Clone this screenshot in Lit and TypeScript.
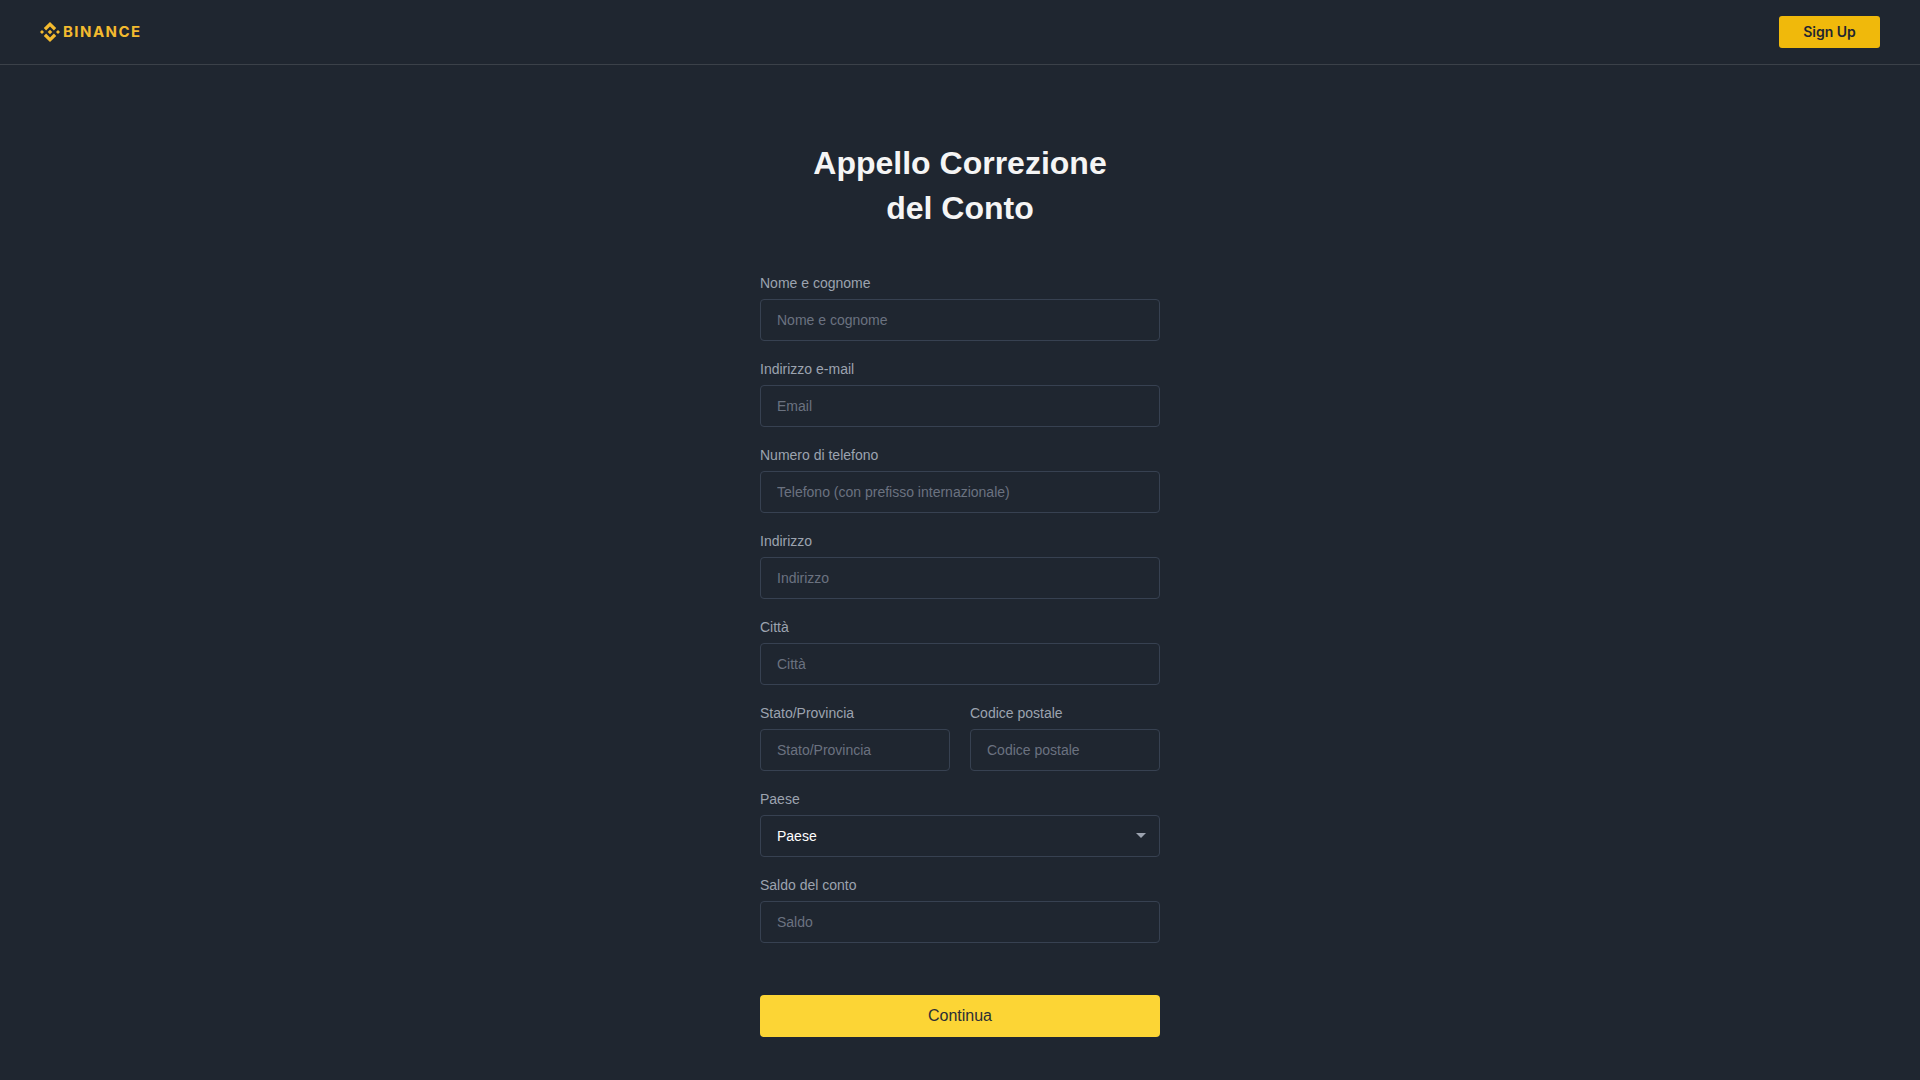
import { LitElement, html, css } from "lit";
import { customElement } from "lit/decorators.js";

@customElement("app-root")
export class AppRoot extends LitElement {
  static styles = css`
    :host { display: block; min-height: 1080px; background: #1f2630; font-family: "Liberation Sans", Arial, sans-serif; }
    .top { display: flex; align-items: center; justify-content: space-between; height: 64px; padding: 0 40px; border-bottom: 1px solid #3b4149; }
    .logo { display: flex; align-items: center; gap: 3px; color: #f3ba2f; }
    .logo svg { display: block; width: 20px; height: 20px; }
    .word { font: 700 15px/20px Inter, sans-serif; letter-spacing: 1.45px; color: #f3ba2f; }
    .signup { display: flex; align-items: center; justify-content: center; width: 101px; height: 32px; border: 0; border-radius: 3px; background: #f0b90b; color: #1f2630; font: 600 14px/14px Inter, sans-serif; padding: 0 0 1px; }
    main { display: flex; flex-direction: column; align-items: center; padding-top: 76px; }
    h1 { margin: 0 0 42px; font-size: 32px; line-height: 45px; font-weight: 700; color: #f5f5f5; text-align: center; }
    form { width: 400px; display: flex; flex-direction: column; gap: 18px; }
    .field { display: flex; flex-direction: column; gap: 6px; min-width: 0; }
    label { font-size: 14px; line-height: 20px; color: #9ca3af; }
    input, .select { box-sizing: border-box; width: 100%; height: 42px; background: transparent; border: 1px solid #374151; border-radius: 4px; padding: 0 16px; font: 14px "Liberation Sans", Arial, sans-serif; color: #fff; outline: none; }
    input::placeholder { color: #6b7280; opacity: 1; }
    .row { display: grid; grid-template-columns: 1fr 1fr; gap: 20px; }
    .select { display: flex; align-items: center; justify-content: space-between; padding-right: 13px; }
    .arrow { width: 10px; height: 5px; display: block; margin-top: -1px; }
    .go { margin-top: 34px; height: 42px; border: 0; border-radius: 4px; background: #fcd535; color: #2b2f36; font: 16px "Liberation Sans", Arial, sans-serif; padding: 0; }
  `;

  private field(label: string, ph: string) {
    return html`<div class="field"><label>${label}</label><input placeholder=${ph} /></div>`;
  }

  render() {
    return html`
      <header class="top">
        <div class="logo">
          <svg viewBox="0 0 20 20" fill="currentColor" aria-hidden="true">
            <path d="M6.1 8.4 10 4.5l3.9 3.9 2.3-2.3L10 0 3.8 6.1z"/>
            <path d="M6.1 11.6 10 15.5l3.9-3.9 2.3 2.3L10 20l-6.2-6.1z"/>
            <path d="M0 10l2-2 2 2-2 2z"/>
            <path d="M16 10l2-2 2 2-2 2z"/>
            <path d="M10 7.7 12.3 10 10 12.3 7.7 10z"/>
          </svg>
          <span class="word">BINANCE</span>
        </div>
        <button class="signup">Sign Up</button>
      </header>
      <main>
        <h1>Appello Correzione<br />del Conto</h1>
        <form>
          ${this.field("Nome e cognome", "Nome e cognome")}
          ${this.field("Indirizzo e-mail", "Email")}
          ${this.field("Numero di telefono", "Telefono (con prefisso internazionale)")}
          ${this.field("Indirizzo", "Indirizzo")}
          ${this.field("Città", "Città")}
          <div class="row">
            ${this.field("Stato/Provincia", "Stato/Provincia")}
            ${this.field("Codice postale", "Codice postale")}
          </div>
          <div class="field">
            <label>Paese</label>
            <div class="select"><span>Paese</span>
              <svg class="arrow" viewBox="0 0 10 5"><path d="M0 0h10L5 5z" fill="#9ca3af"/></svg>
            </div>
          </div>
          ${this.field("Saldo del conto", "Saldo")}
          <button type="button" class="go">Continua</button>
        </form>
      </main>
    `;
  }
}
